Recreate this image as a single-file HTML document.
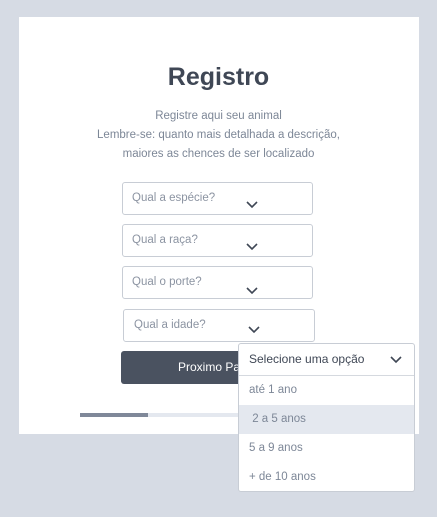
<!DOCTYPE html>
<html><head><style>
body{margin:0;width:437px;height:517px;background:#d6dbe4;font-family:"Liberation Sans",sans-serif;position:relative;overflow:hidden}
.card{position:absolute;left:19px;top:17px;width:400px;height:417px;background:#fff}
h1{position:absolute;left:0;width:437px;top:63px;margin:0;text-align:center;font-size:25px;color:#3f4755;font-weight:bold}
.sub{position:absolute;left:0;width:437px;top:107px;text-align:center;font-size:11.5px;line-height:19px;color:#7d8797}
.in{position:absolute;width:191px;height:33px;border:1px solid #c8cdd5;border-radius:3px;background:#fff;box-sizing:border-box}
.in span{position:absolute;left:9px;top:9px;font-size:11.5px;color:#8c94a2}
.chev{position:absolute}
.btn{position:absolute;left:121px;top:351px;width:200px;height:33px;background:#4a5260;border-radius:3px;color:#fff;font-size:12px;line-height:33px;padding-left:57px;box-sizing:border-box}
.bar{position:absolute;left:80px;top:413px;width:160px;height:4px;background:#e4e8ef}
.bar div{width:68px;height:4px;background:#7f8899}
.dd{position:absolute;left:238px;top:343px;width:177px;height:149px;background:#fff;border:1px solid #c8cdd5;border-radius:3px;box-sizing:border-box}
.dd .hd{height:31px;border-bottom:1px solid #d5d9df;font-size:12px;color:#3f4755;line-height:31px;padding-left:10px;position:relative}
.dd .o{height:29px;line-height:29px;padding-left:10px;font-size:11.5px;color:#7d8797}
.dd .o.h{background:#e4e8ef}
</style></head><body>
<div class="card"></div>
<h1>Registro</h1>
<div class="sub">Registre aqui seu animal<br>Lembre-se: quanto mais detalhada a descrição,<br>maiores as chences de ser localizado</div>
<div class="in" style="left:122px;top:182px"><span>Qual a espécie?</span><svg class="chev" style="left:123px;top:18px" width="12" height="8"><path d="M1 1l5 5 5-5" stroke="#3f4755" stroke-width="1.6" fill="none"/></svg></div>
<div class="in" style="left:122px;top:224px"><span>Qual a raça?</span><svg class="chev" style="left:123px;top:18px" width="12" height="8"><path d="M1 1l5 5 5-5" stroke="#3f4755" stroke-width="1.6" fill="none"/></svg></div>
<div class="in" style="left:122px;top:266px"><span>Qual o porte?</span><svg class="chev" style="left:123px;top:20px" width="12" height="8"><path d="M1 1l5 5 5-5" stroke="#3f4755" stroke-width="1.6" fill="none"/></svg></div>
<div class="in" style="left:123px;top:309px;width:192px"><span style="left:10px">Qual a idade?</span><svg class="chev" style="left:124px;top:16px" width="12" height="8"><path d="M1 1l5 5 5-5" stroke="#3f4755" stroke-width="1.6" fill="none"/></svg></div>
<div class="btn">Proximo Passo</div>
<div class="bar"><div></div></div>
<div class="dd">
<div class="hd">Selecione uma opção<svg style="position:absolute;left:151px;top:12px" width="12" height="8"><path d="M1 1l5 5 5-5" stroke="#3f4755" stroke-width="1.6" fill="none"/></svg></div>
<div class="o">até 1 ano</div>
<div class="o h">&nbsp;2 a 5 anos</div>
<div class="o">5 a 9 anos</div>
<div class="o">+ de 10 anos</div>
</div>
</body></html>
